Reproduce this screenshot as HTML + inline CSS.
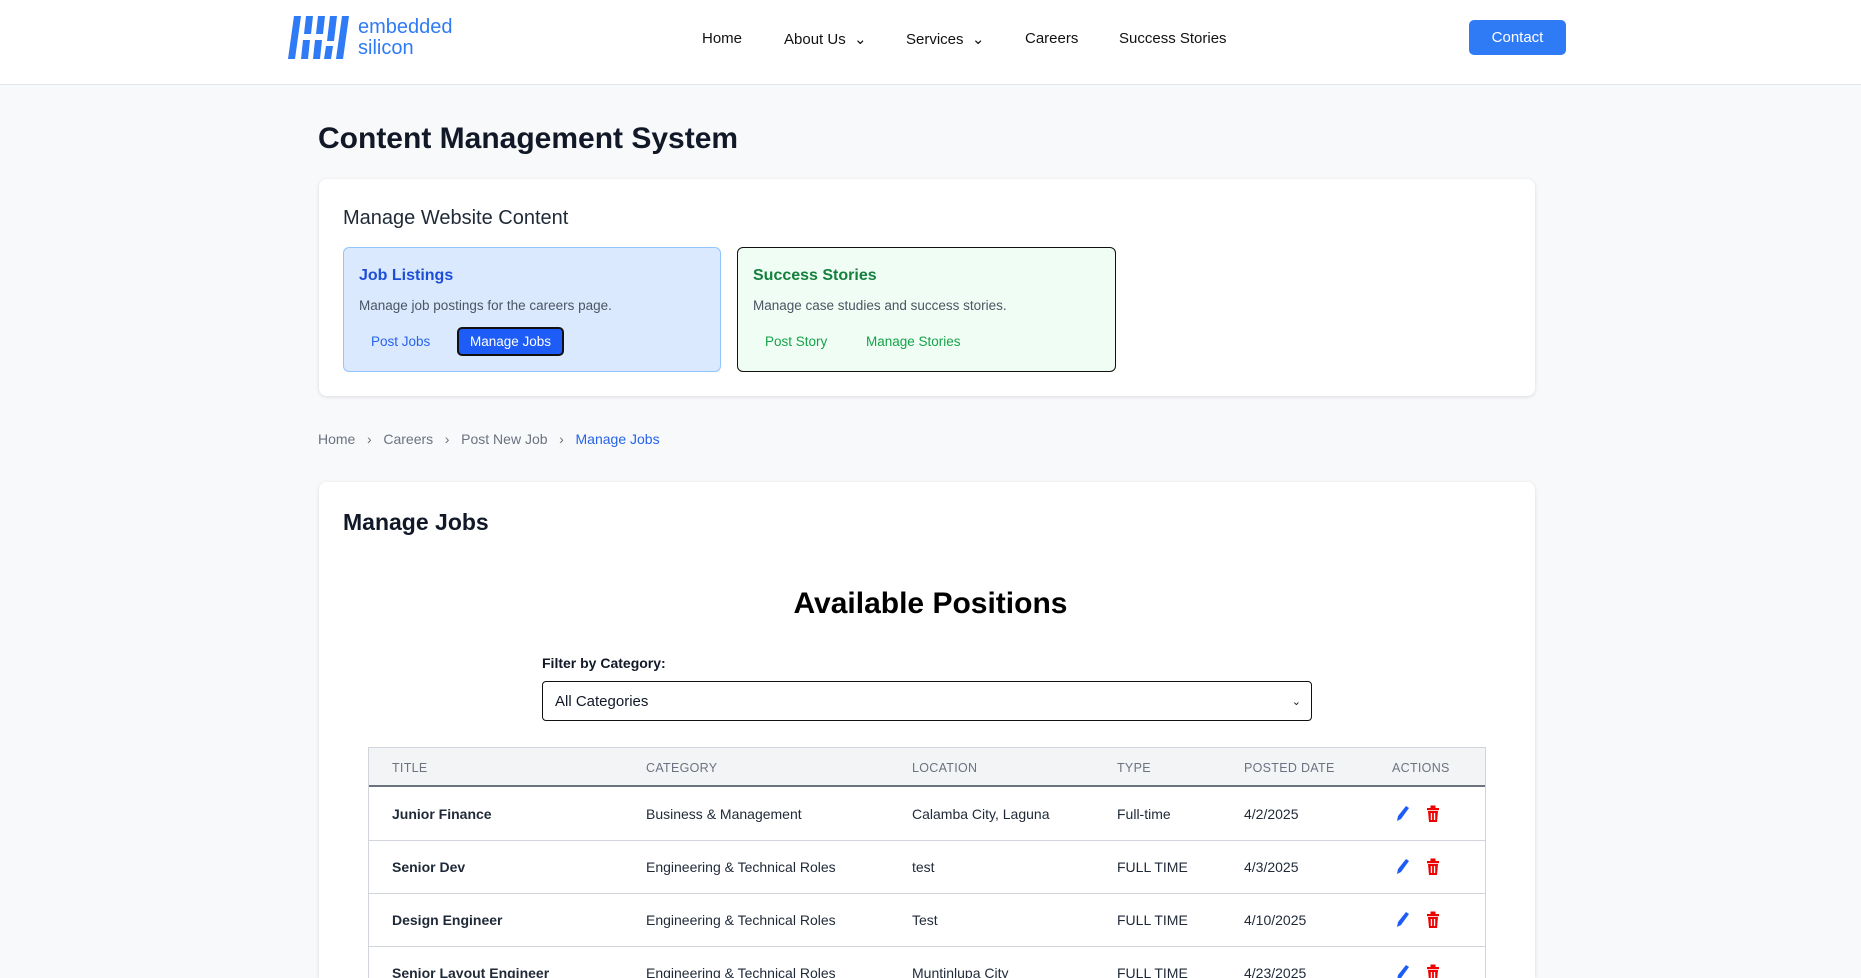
<!DOCTYPE html>
<html><head><meta charset="utf-8"><style>
*{box-sizing:border-box;margin:0;padding:0}
html,body{width:1861px;height:978px;overflow:hidden}
body{background:#f8f9fb;font-family:"Liberation Sans",sans-serif;color:#111827;position:relative}
.abs{position:absolute}
header{position:absolute;left:0;top:0;width:1861px;height:85px;background:#fff;border-bottom:1px solid #e5e7eb}
.nav{position:absolute;top:30px;font-size:15px;color:#111}
.card{position:absolute;background:#fff;border-radius:8px;box-shadow:0 1px 4px rgba(0,0,0,.12)}
.th{position:absolute;top:761px;font-size:12.5px;color:#6b7280;letter-spacing:.3px}
.td{position:absolute;font-size:14px;color:#1f2937}
.row{position:absolute;left:368px;width:1118px;height:1px;background:#d1d5db}
</style></head><body>
<header>
<svg class="abs" style="left:287px;top:16px" width="66" height="43" viewBox="0 0 66 43"><g fill="#2f7bf6">
<polygon points="7,0 14,0 8,43 1,43"/>
<polygon points="19,0 26,0 24,18 17,18"/><polygon points="16,24 23,24 21,43 14,43"/>
<polygon points="31,0 38,0 36,18 29,18"/><polygon points="28,24 35,24 33,43 26,43"/>
<polygon points="43,0 50,0 47,25 40,25"/><polygon points="39,30 46,30 44,43 37,43"/>
<polygon points="55,0 62,0 56,43 49,43"/></g></svg>
<div class="abs" style="left:358px;top:17px;color:#2f7bf6;font-size:20px;line-height:21px">embedded<br>silicon</div>
<div class="nav" style="left:702px">Home</div>
<div class="nav" style="left:784px">About Us &nbsp;⌄</div>
<div class="nav" style="left:906px">Services &nbsp;⌄</div>
<div class="nav" style="left:1025px">Careers</div>
<div class="nav" style="left:1119px">Success Stories</div>
<div class="abs" style="left:1469px;top:20px;width:97px;height:35px;background:#2f7bf6;border-radius:5px;color:#fff;font-size:15px;text-align:center;line-height:35px">Contact</div>
</header>
<div class="abs" style="left:318px;top:122px;font-size:30px;font-weight:bold">Content Management System</div>
<div class="card" style="left:319px;top:179px;width:1216px;height:217px">
<div class="abs" style="left:24px;top:28px;font-size:20px;color:#1f2937">Manage Website Content</div>
<div class="abs" style="left:24px;top:68px;width:378px;height:125px;background:#dbe9fe;border:1px solid #93c5fd;border-radius:6px">
<div class="abs" style="left:15px;top:19px;font-size:16px;color:#1d4ed8;font-weight:bold">Job Listings</div>
<div class="abs" style="left:15px;top:50px;font-size:13.5px;color:#4b5563">Manage job postings for the careers page.</div>
<div class="abs" style="left:27px;top:86px;font-size:13.5px;color:#2563eb">Post Jobs</div>
<div class="abs" style="left:113px;top:79px;width:107px;height:29px;background:#1d5cf6;border:2px solid #111;border-radius:5px;color:#fff;font-size:13.5px;text-align:center;line-height:25px">Manage Jobs</div>
</div>
<div class="abs" style="left:418px;top:68px;width:379px;height:125px;background:#effdf4;border:1px solid #111;border-radius:6px">
<div class="abs" style="left:15px;top:19px;font-size:16px;color:#15803d;font-weight:bold">Success Stories</div>
<div class="abs" style="left:15px;top:50px;font-size:13.5px;color:#4b5563">Manage case studies and success stories.</div>
<div class="abs" style="left:27px;top:86px;font-size:13.5px;color:#16a34a">Post Story</div>
<div class="abs" style="left:128px;top:86px;font-size:13.5px;color:#16a34a">Manage Stories</div>
</div>
</div>
<div class="abs" style="left:318px;top:431px;font-size:14px;color:#6b7280">Home &nbsp;&nbsp;›&nbsp;&nbsp; Careers &nbsp;&nbsp;›&nbsp;&nbsp; Post New Job &nbsp;&nbsp;›&nbsp;&nbsp; <span style="color:#2563eb">Manage Jobs</span></div>
<div class="card" style="left:319px;top:482px;width:1216px;height:496px;border-radius:8px 8px 0 0"></div>
<div class="abs" style="left:343px;top:509px;font-size:23px;font-weight:bold">Manage Jobs</div>
<div class="abs" style="left:0;width:1861px;text-align:center;top:587px;font-size:30px;font-weight:bold;color:#000">Available Positions</div>
<div class="abs" style="left:542px;top:655px;font-size:14px;font-weight:bold">Filter by Category:</div>
<div class="abs" style="left:542px;top:681px;width:770px;height:40px;border:1px solid #111;border-radius:4px;background:#fff;font-size:15px;line-height:40px;padding-left:12px">All Categories<span style="position:absolute;right:10px;font-size:11px">⌄</span></div>
<div class="abs" style="left:368px;top:747px;width:1118px;height:231px;border:1px solid #d1d5db;border-bottom:none;background:#fff"></div>
<div class="abs" style="left:369px;top:748px;width:1116px;height:39px;background:#f3f4f6;border-bottom:2px solid #6b7280"></div>
<div class="th" style="left:392px">TITLE</div><div class="th" style="left:646px">CATEGORY</div><div class="th" style="left:912px">LOCATION</div><div class="th" style="left:1117px">TYPE</div><div class="th" style="left:1244px">POSTED DATE</div><div class="th" style="left:1392px">ACTIONS</div>
<div class="row" style="top:840px"></div><div class="row" style="top:893px"></div><div class="row" style="top:946px"></div>
<div class="td" style="top:806px;left:392px;font-weight:bold">Junior Finance</div><div class="td" style="top:806px;left:646px">Business &amp; Management</div><div class="td" style="top:806px;left:912px">Calamba City, Laguna</div><div class="td" style="top:806px;left:1117px">Full-time</div><div class="td" style="top:806px;left:1244px">4/2/2025</div>
<div class="td" style="top:859px;left:392px;font-weight:bold">Senior Dev</div><div class="td" style="top:859px;left:646px">Engineering &amp; Technical Roles</div><div class="td" style="top:859px;left:912px">test</div><div class="td" style="top:859px;left:1117px">FULL TIME</div><div class="td" style="top:859px;left:1244px">4/3/2025</div>
<div class="td" style="top:912px;left:392px;font-weight:bold">Design Engineer</div><div class="td" style="top:912px;left:646px">Engineering &amp; Technical Roles</div><div class="td" style="top:912px;left:912px">Test</div><div class="td" style="top:912px;left:1117px">FULL TIME</div><div class="td" style="top:912px;left:1244px">4/10/2025</div>
<div class="td" style="top:965px;left:392px;font-weight:bold">Senior Layout Engineer</div><div class="td" style="top:965px;left:646px">Engineering &amp; Technical Roles</div><div class="td" style="top:965px;left:912px">Muntinlupa City</div><div class="td" style="top:965px;left:1117px">FULL TIME</div><div class="td" style="top:965px;left:1244px">4/23/2025</div>
<svg class="abs" style="left:1395px;top:804px" width="50" height="174" viewBox="0 0 50 174">
<g id="ic"><path d="M2 17 L3 12 L11 2 L14 4 L6 15 Z" fill="#1d5cf6"/><rect x="32" y="4" width="12" height="2.2" fill="#e00"/><rect x="35.5" y="1.5" width="5" height="3" fill="#e00"/><path d="M33 7h10l-1 11h-8z" fill="#e00"/><rect x="35.8" y="9" width="1.3" height="7" fill="#fff"/><rect x="38.9" y="9" width="1.3" height="7" fill="#fff"/></g>
<use href="#ic" y="53"/><use href="#ic" y="106"/><use href="#ic" y="159"/>
</svg>
</body></html>
